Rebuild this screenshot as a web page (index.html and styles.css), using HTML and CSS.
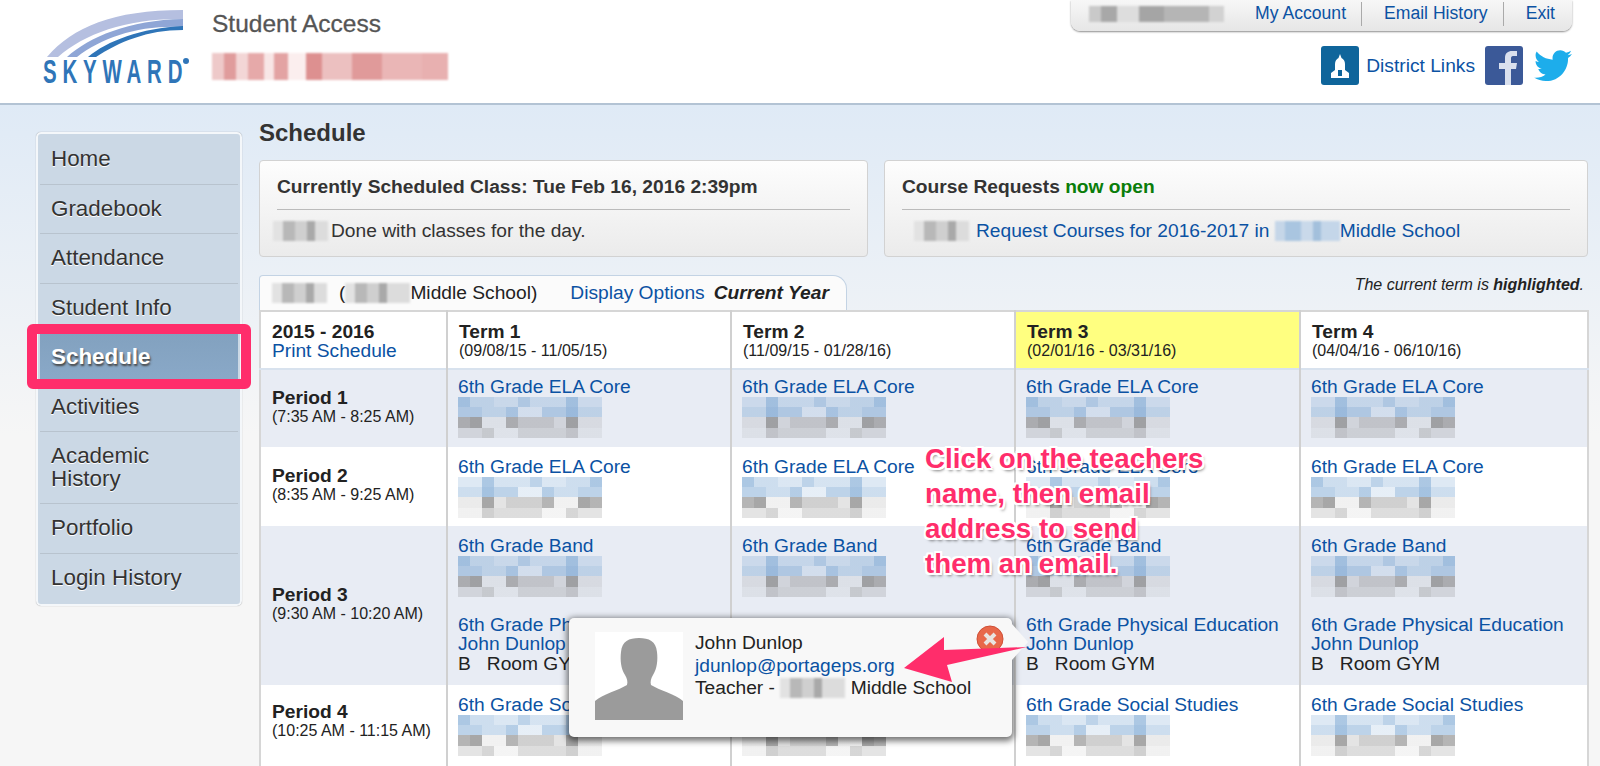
FILE: index.html
```html
<!DOCTYPE html>
<html lang="en">
<head>
    <meta charset="UTF-8">
    <title>Student Access - Schedule</title>
    <link rel="stylesheet" href="styles.css">
</head>
<body>
    <!-- Top header -->
    <header class="top-header">
        <div class="logo">
            <svg width="150" height="84" viewBox="0 0 150 84">
                <path d="M4 48 C30 18 70 1 140 1 L140 10 C86 9 42 24 15 48 Z" fill="#b5bfe0"/>
                <path d="M24 48 C46 28 86 11 140 10 L140 18 C96 16 60 28 34 48 Z" fill="#8fa6d6"/>
                <path d="M45 48 C64 32 98 19 140 17 L140 21 C104 21 76 33 53 48 Z" fill="#2f75b8"/>
                <text transform="translate(0 74) scale(.62 1)" class="logo-word" textLength="225">SKYWARD</text>
                <circle cx="143" cy="52" r="3" fill="#2f75b8"/>
            </svg>
        </div>
        <div class="title-block">
            <div class="app-title">Student Access</div>
            <div class="smear-red"></div>
        </div>
        <div class="header-right">
            <nav class="user-bar">
                <span class="smear-user"></span>
                <a href="#">My Account</a>
                <a href="#">Email History</a>
                <a href="#">Exit</a>
            </nav>
            <div class="social-row">
                <svg class="icon" width="38" height="39" viewBox="0 0 38 39">
                    <rect width="38" height="39" rx="3" fill="#0f659b"/>
                    <path d="M19 8 L20.500 12 C22.500 13 24 15 24 18 L24 24 L28 27 L28 32 L10 32 L10 27 L14 24 L14 18 C14 15 15.500 13 17.500 12 Z" fill="#fff"/>
                    <rect x="17" y="24" width="4" height="6" fill="#0f659b"/>
                </svg>
                <a href="#" class="district-link">District Links</a>
                <svg class="icon" width="38" height="39" viewBox="0 0 38 39">
                    <rect width="38" height="39" rx="3" fill="#3b5998"/>
                    <path d="M20 39 L20 23 L14 23 L14 17 L20 17 L20 12 C20 7 23 5 27 5 L32 5 L32 10 L28 10 C26.500 10 26 11 26 12.500 L26 17 L32 17 L31 23 L26 23 L26 39 Z" fill="#d9e0ee"/>
                </svg>
                <svg class="icon" width="38" height="34" viewBox="0 0 24 20">
                    <path d="M24 2.400 C23.100 2.800 22.200 3 21.200 3.200 C22.200 2.600 23 1.600 23.400 .400 C22.400 1 21.300 1.400 20.200 1.600 C19.300 .600 18 0 16.600 0 C13.900 0 11.700 2.200 11.700 4.900 C11.700 5.300 11.700 5.700 11.800 6 C7.700 5.800 4.100 3.900 1.700 .900 C1.200 1.600 1 2.500 1 3.400 C1 5.100 1.900 6.600 3.200 7.500 C2.400 7.500 1.600 7.200 1 6.900 L1 7 C1 9.400 2.700 11.300 4.900 11.800 C4.100 12 3.300 12 2.700 11.900 C3.300 13.800 5.100 15.300 7.300 15.300 C5.600 16.600 3.500 17.400 1.200 17.400 C.800 17.400 .400 17.400 0 17.300 C2.200 18.700 4.800 19.500 7.500 19.500 C16.600 19.500 21.500 12 21.500 5.500 L21.500 4.900 C22.500 4.200 23.300 3.400 24 2.400 Z" fill="#1dadeb"/>
                </svg>
            </div>
        </div>
    </header>

    <div class="page">
        <!-- Side menu -->
        <ul class="side-menu">
            <li>Home</li>
            <li>Gradebook</li>
            <li>Attendance</li>
            <li>Student Info</li>
            <li class="active">Schedule</li>
            <li>Activities</li>
            <li>Academic<br>History</li>
            <li>Portfolio</li>
            <li>Login History</li>
        </ul>

        <main class="content">
            <h1>Schedule</h1>

            <div class="panels">
                <section class="panel">
                    <h2>Currently Scheduled Class: Tue Feb 16, 2016 2:39pm</h2>
                    <p><span class="smear-inline name"></span>Done with classes for the day.</p>
                </section>
                <section class="panel">
                    <h2>Course Requests <span class="open">now open</span></h2>
                    <p class="indent"><span class="smear-inline name"></span><a href="#">Request Courses for 2016-2017 in <span class="smear-inline school blue"></span>Middle School</a></p>
                </section>
            </div>

            <div class="tab-row">
                <div class="tab">
                    <span class="smear-inline name"></span>
                    <span class="tab-school">(<span class="smear-inline school"></span>Middle School)</span>
                    <a href="#">Display Options</a>
                    <b><i>Current Year</i></b>
                </div>
                <div class="term-note"><i>The current term is <b>highlighted</b>.</i></div>
            </div>

            <table class="schedule">
                <colgroup>
                    <col class="col-period"><col class="col-1"><col class="col-2"><col class="col-3"><col class="col-4">
                </colgroup>
                <tr class="head">
                    <th><b>2015 - 2016</b><a href="#">Print Schedule</a></th>
                    <th><b>Term 1</b><small>(09/08/15 - 11/05/15)</small></th>
                    <th><b>Term 2</b><small>(11/09/15 - 01/28/16)</small></th>
                    <th class="current"><b>Term 3</b><small>(02/01/16 - 03/31/16)</small></th>
                    <th><b>Term 4</b><small>(04/04/16 - 06/10/16)</small></th>
                </tr>
                <tr class="shade first">
                    <th><b>Period 1</b><small>(7:35 AM - 8:25 AM)</small></th>
                    <td><div class="course"><a href="#">6th Grade ELA Core</a><div class="smear"></div></div></td>
                    <td><div class="course"><a href="#">6th Grade ELA Core</a><div class="smear alt"></div></div></td>
                    <td><div class="course"><a href="#">6th Grade ELA Core</a><div class="smear"></div></div></td>
                    <td><div class="course"><a href="#">6th Grade ELA Core</a><div class="smear alt"></div></div></td>
                </tr>
                <tr>
                    <th><b>Period 2</b><small>(8:35 AM - 9:25 AM)</small></th>
                    <td><div class="course"><a href="#">6th Grade ELA Core</a><div class="smear alt"></div></div></td>
                    <td><div class="course"><a href="#">6th Grade ELA Core</a><div class="smear"></div></div></td>
                    <td><div class="course"><a href="#">6th Grade ELA Core</a><div class="smear alt"></div></div></td>
                    <td><div class="course"><a href="#">6th Grade ELA Core</a><div class="smear"></div></div></td>
                </tr>
                <tr class="shade">
                    <th><b>Period 3</b><small>(9:30 AM - 10:20 AM)</small></th>
                    <td>
                        <div class="course"><a href="#">6th Grade Band</a><div class="smear"></div></div>
                        <div class="course"><a href="#">6th Grade Physical Education</a><a href="#">John Dunlop</a><div>B &nbsp; Room GYM</div></div>
                    </td>
                    <td>
                        <div class="course"><a href="#">6th Grade Band</a><div class="smear alt"></div></div>
                        <div class="course"><a href="#">6th Grade Physical Education</a><a href="#">John Dunlop</a><div>B &nbsp; Room GYM</div></div>
                    </td>
                    <td>
                        <div class="course"><a href="#">6th Grade Band</a><div class="smear"></div></div>
                        <div class="course"><a href="#">6th Grade Physical Education</a><a href="#">John Dunlop</a><div>B &nbsp; Room GYM</div></div>
                    </td>
                    <td>
                        <div class="course"><a href="#">6th Grade Band</a><div class="smear alt"></div></div>
                        <div class="course"><a href="#">6th Grade Physical Education</a><a href="#">John Dunlop</a><div>B &nbsp; Room GYM</div></div>
                    </td>
                </tr>
                <tr class="last">
                    <th><b>Period 4</b><small>(10:25 AM - 11:15 AM)</small></th>
                    <td><div class="course"><a href="#">6th Grade Social Studies</a><div class="smear"></div></div></td>
                    <td><div class="course"><a href="#">6th Grade Social Studies</a><div class="smear alt"></div></div></td>
                    <td><div class="course"><a href="#">6th Grade Social Studies</a><div class="smear"></div></div></td>
                    <td><div class="course"><a href="#">6th Grade Social Studies</a><div class="smear alt"></div></div></td>
                </tr>
            </table>
        </main>
    </div>

    <!-- Teacher popup -->
    <div class="popup">
        <svg class="avatar" width="88" height="88" viewBox="0 0 88 88">
            <rect width="88" height="88" fill="#fff"/>
            <path d="M0 88 L0 69 C8 62 24 58 32 53 C33 50 32 46 30 43 C26 37 25 28 26 20 C27 9 34 6 44 6 C54 6 61 9 62 20 C63 28 62 37 58 43 C56 46 55 50 56 53 C64 58 80 62 88 69 L88 88 Z" fill="#9b9b9b"/>
        </svg>
        <div class="popup-text">
            <div>John Dunlop</div>
            <a href="#">jdunlop@portageps.org</a>
            <div>Teacher - <span class="smear-inline school"></span> Middle School</div>
        </div>
        <svg class="popup-close" width="28" height="28" viewBox="0 0 28 28">
            <circle cx="14" cy="14" r="13" fill="#e8684a" stroke="#d04f36"/>
            <path d="M9 9 L19 19 M19 9 L9 19" stroke="#e9e4e0" stroke-width="4"/>
        </svg>
    </div>

    <!-- Annotations drawn over the page -->
    <div class="mark-box"></div>
    <div class="mark-text">Click on the teachers<br>name, then email<br>address to send<br>them an email.</div>
    <svg class="mark-arrow" width="130" height="50" viewBox="0 0 130 50">
        <path d="M1 31 L41 0 L41 13 L124 10 L44 28 L49 45 Z" fill="#ff2d6b"/>
    </svg>
</body>
</html>
```

FILE: styles.css
```css
/* Reset and body styling */
* {
    margin: 0;
    padding: 0;
    box-sizing: border-box;
}

html, body {
    height: 766px;
    overflow: hidden;
}

body {
    position: relative;
    font-family: "Liberation Sans", Arial, sans-serif;
    font-size: 19.2px;
    color: #222;
    background-color: #f6f6f6;
}

a {
    color: #0b52a3;
    text-decoration: none;
}

/* Header styling */
.top-header {
    display: flex;
    height: 105px;
    background-color: #fff;
    border-bottom: 2px solid #b3c3d4;
}

.logo {
    margin: 9px 0 0 43px;
    width: 169px;
}

.logo-word {
    font-family: "Liberation Sans", Arial, sans-serif;
    font-weight: bold;
    font-size: 33px;
    fill: #2f75b8;
}

.app-title {
    margin-top: 10px;
    font-size: 24.5px;
    line-height: 28px;
    color: #555;
    -webkit-text-stroke: 0.3px #555;
}

.smear-red {
    margin-top: 15px;
    width: 236px;
    height: 27px;
    filter: blur(1px);
    background:
        linear-gradient(90deg, #eec9c9 0 12px, #e09c9c 0 24px, #f3d6d6 0 36px, #e6a9a9 0 52px, #f8e6e6 0 62px, #e3a3a3 0 76px, #fbeeee 0 94px, #dd9090 0 110px, #ecc0c0 0 140px, #e09a9a 0 170px, #eab6b6 0 210px, #e8b0b0 0 236px);
}

.header-right {
    margin-left: auto;
    width: 502px;
    padding-right: 28px;
    display: flex;
    flex-direction: column;
    align-items: flex-end;
}

.user-bar {
    display: flex;
    align-items: center;
    width: 501px;
    height: 31px;
    padding-bottom: 4px;
    font-size: 17.6px;
    background: linear-gradient(#f7f7f7, #e6e6e6);
    border-radius: 0 0 9px 9px;
    box-shadow: 0 1px 2px rgba(0, 0, 0, 0.45);
}

.user-bar a {
    height: 24px;
    line-height: 22px;
    padding: 0 15px 0 22px;
    border-right: 1px solid #aaa;
}

.user-bar a:last-child {
    padding-right: 17px;
    border-right: none;
}

.smear-user {
    margin: 0 auto 0 18px;
    width: 135px;
    height: 16px;
    filter: blur(1px);
    background: linear-gradient(90deg, #c9c9c9 0 12px, #a8a8a8 0 28px, #ddd 0 50px, #a5a5a5 0 75px, #b5b5b5 0 120px, #d2d2d2 0 135px);
}

.social-row {
    display: flex;
    align-items: center;
    margin-top: 15px;
}

.district-link {
    margin: 0 10px 0 7px;
}

.icon {
    display: block;
}

.social-row .icon:last-child {
    margin-left: 11px;
}

/* Page layout */
.page {
    display: flex;
    align-items: flex-start;
    height: 661px;
    padding: 15px 12px 0 36px;
    background: linear-gradient(#dfeaf6, #f6f6f6 330px);
}

/* Side menu styling */
.side-menu {
    list-style: none;
    width: 206px;
    margin: 12px 17px 0 0;
    flex-shrink: 0;
    padding: 1px 2px 2px;
    background-color: #cbd8e5;
    border: 2px solid #f4f7fa;
    border-radius: 5px;
    box-shadow: 0 0 1px rgba(0, 0, 0, 0.4);
}

.side-menu li {
    padding: 13px 12px 13px 11px;
    font-size: 22.4px;
    line-height: 22.500px;
    color: #333;
    text-shadow: 0 1px 0 #fff;
    border-bottom: 1px solid #b8c3ce;
}

.side-menu li:last-child {
    border-bottom: none;
}

.side-menu .active {
    background: linear-gradient(#82a1bf, #8aa9c8);
    color: #fff;
    font-weight: bold;
    text-shadow: 1px 2px 2px #444;
}

/* Main column */
.content {
    flex: 1;
    min-width: 0;
}

.content h1 {
    font-size: 24px;
    line-height: 26px;
    color: #333;
    margin-bottom: 14px;
}

.panels {
    display: flex;
    gap: 16px;
}

.panel {
    flex: 1 1 0;
    height: 97px;
    padding: 16px 17px 0;
    background: linear-gradient(#fdfdfd, #ebebeb);
    border: 1px solid #d2d2d2;
    border-radius: 4px;
}

.panel:first-child {
    flex: 0 0 609px;
}

.panel h2 {
    font-size: 19.2px;
    line-height: 20px;
    padding-bottom: 12px;
    color: #333;
    border-bottom: 1px solid #bbb;
}

.panel p {
    margin-top: 10px;
    margin-left: -4px;
    line-height: 22px;
    color: #333;
}

.panel p.indent {
    margin-left: 12px;
}

.panel p.indent .name {
    margin-right: 7px;
}

.open {
    color: #0a7d0a;
}

.smear-inline {
    display: inline-block;
    vertical-align: -4px;
    height: 20px;
    filter: blur(1px);
    background: linear-gradient(90deg, #e2e2e2 0 10px, #b8b8b8 0 22px, #cfcfcf 0 34px, #a9a9a9 0 42px, #dcdcdc 0 65px);
}

.smear-inline.name {
    width: 55px;
    margin-right: 3px;
}

.smear-inline.school {
    width: 65px;
}

.smear-inline.blue {
    background: linear-gradient(90deg, #c5d6e8 0 10px, #a9c5e0 0 26px, #c9d9ea 0 38px, #a3c0dc 0 46px, #c4d6e9 0 65px);
}

/* Tab row */
.tab-row {
    display: flex;
    align-items: flex-start;
    justify-content: space-between;
    margin-top: 18px;
}

.tab {
    display: flex;
    align-items: center;
    width: 588px;
    height: 35px;
    padding-left: 12px;
    background-color: #fbfbfb;
    border: 1px solid #c3d3e4;
    border-bottom: none;
    border-radius: 4px 14px 0 0;
    white-space: nowrap;
}

.tab-school {
    margin-left: 9px;
}

.tab a {
    margin: 0 9px 0 33px;
}

.term-note {
    font-size: 16px;
    line-height: 20px;
    padding-right: 4px;
}

/* Schedule table */
.schedule {
    width: 1328px;
    table-layout: fixed;
    border-collapse: collapse;
    border: 2px solid #d6d6d6;
    line-height: 19.4px;
    background-color: #fff;
}

.col-period { width: 187px; }
.col-1 { width: 284px; }
.col-2 { width: 284px; }
.col-3 { width: 285px; }
.col-4 { width: 288px; }

.schedule th, .schedule td {
    text-align: left;
    font-weight: normal;
    vertical-align: top;
    border-left: 2px solid #d0d0d0;
}

.schedule th:first-child {
    vertical-align: middle;
    border-left: none;
    padding: 0 0 3px 11px;
}

.schedule .head th {
    vertical-align: top;
    height: 58px;
    padding: 10px 0 0 11px;
}

.schedule .first th, .schedule .first td {
    border-top: 2px solid #d8e2ee;
}

.schedule b, .schedule small, .schedule th a {
    display: block;
}

.schedule small {
    font-size: 16px;
    line-height: 19px;
}

.schedule .current {
    background-color: #ffff80;
}

.shade th, .shade td {
    background-color: #e8ecf4;
}

.course {
    height: 79px;
    padding: 10px 0 0 10px;
}

.course + .course {
    height: 80px;
}

.first .course {
    height: 77px;
    padding-top: 7px;
}

/* The last row runs past the bottom of the window */
.last .course {
    height: 120px;
}

.last th:first-child {
    vertical-align: top;
    padding-top: 17px;
}

.course a {
    display: block;
}

/* Pixelated names in the table cells */
.smear {
    --blue-a: linear-gradient(90deg, rgba(90, 145, 200, .5) 0 12px, rgba(90, 145, 200, .3) 0 36px, rgba(90, 145, 200, .22) 0 60px, rgba(90, 145, 200, .4) 0 72px, rgba(90, 145, 200, .25) 0 108px, rgba(90, 145, 200, .5) 0 120px, rgba(90, 145, 200, .2) 0 144px);
    --blue-b: linear-gradient(90deg, rgba(90, 145, 200, .4) 0 24px, rgba(90, 145, 200, .3) 0 48px, rgba(90, 145, 200, .45) 0 60px, rgba(90, 145, 200, .15) 0 84px, rgba(90, 145, 200, .4) 0 108px, rgba(90, 145, 200, .55) 0 120px, rgba(90, 145, 200, .3) 0 144px);
    --gray-a: linear-gradient(90deg, rgba(120, 120, 120, .55) 0 12px, rgba(120, 120, 120, .65) 0 24px, rgba(120, 120, 120, .1) 0 48px, rgba(120, 120, 120, .55) 0 60px, rgba(120, 120, 120, .35) 0 96px, rgba(120, 120, 120, .2) 0 108px, rgba(120, 120, 120, .65) 0 120px, rgba(120, 120, 120, .15) 0 144px);
    --gray-b: linear-gradient(90deg, rgba(120, 120, 120, .2) 0 24px, rgba(120, 120, 120, .3) 0 36px, rgba(120, 120, 120, .08) 0 60px, rgba(120, 120, 120, .25) 0 108px, rgba(120, 120, 120, .35) 0 120px, rgba(120, 120, 120, .1) 0 144px);
    width: 144px;
    height: 41px;
    margin: 1px 0 0 0;
    filter: blur(0.7px);
    background-image: var(--blue-a), var(--blue-b), var(--gray-a), var(--gray-b);
    background-size: 144px 10px, 144px 10px, 144px 11px, 144px 10px;
    background-position: 0 0, 0 10px, 0 20px, 0 31px;
    background-repeat: no-repeat;
}

.smear.alt {
    transform: scaleX(-1);
}

/* Teacher popup */
.popup {
    position: absolute;
    left: 569px;
    top: 618px;
    width: 443px;
    height: 119px;
    display: flex;
    padding: 14px 26px;
    gap: 12px;
    background-color: #f8f8f8;
    border-radius: 5px;
    box-shadow: 0 2px 6px 2px rgba(0, 0, 0, 0.55);
    line-height: 22.500px;
    color: #222;
}

.popup::after {
    content: "";
    position: absolute;
    left: 100%;
    top: 6px;
    border-left: 16px solid #f8f8f8;
    border-top: 18px solid transparent;
    border-bottom: 18px solid transparent;
}

.popup-close {
    position: absolute;
    top: 7px;
    right: 8px;
}

.avatar {
    flex-shrink: 0;
}

/* Annotations */
.mark-box {
    position: absolute;
    left: 27px;
    top: 324px;
    width: 224px;
    height: 65px;
    border: 10px solid #ff2d6b;
    border-radius: 6px;
}

.mark-text {
    position: absolute;
    left: 925px;
    top: 441px;
    font-size: 27.7px;
    line-height: 35px;
    font-weight: bold;
    white-space: nowrap;
    color: #ff2d6b;
    text-shadow: 2px 0 0 #fff, -2px 0 0 #fff, 0 2px 0 #fff, 0 -2px 0 #fff, 2px 2px 0 #fff, -2px -2px 0 #fff, 2px -2px 0 #fff, -2px 2px 0 #fff, 2px 3px 3px rgba(0, 0, 0, 0.5);
}

.mark-arrow {
    position: absolute;
    left: 903px;
    top: 637px;
}
```
